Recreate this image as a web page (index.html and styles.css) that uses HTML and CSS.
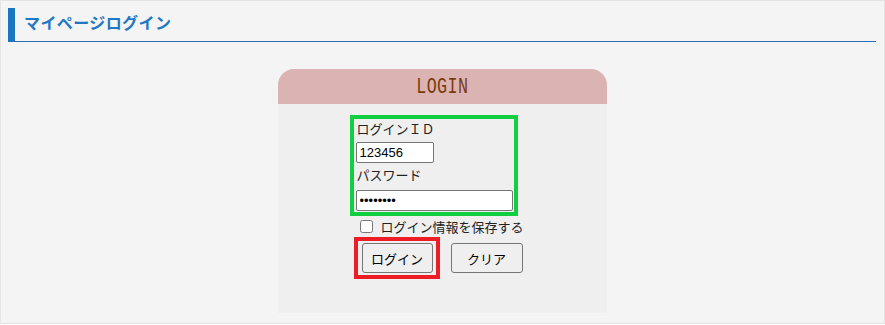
FILE: index.html
```html
<!DOCTYPE html>
<html lang="ja">
<head>
<meta charset="utf-8">
<title>マイページログイン</title>
<link rel="stylesheet" href="styles.css">
</head>
<body>
<div class="page">
  <h1 class="page-title">マイページログイン</h1>
  <div class="login-box">
    <div class="login-head"><span class="login-head-text">LOGIN</span></div>
    <div class="login-body">
      <div class="creds">
        <div class="field-label">ログインＩＤ</div>
        <input class="input input-id" type="text" value="123456">
        <div class="field-label field-label-2">パスワード</div>
        <input class="input input-pw" type="password" value="12345678">
      </div>
      <label class="remember"><input class="remember-check" type="checkbox"><span>ログイン情報を保存する</span></label>
      <div class="actions">
        <div class="login-frame"><button class="btn" type="button">ログイン</button></div>
        <button class="btn btn-clear" type="button">クリア</button>
      </div>
    </div>
  </div>
</div>
</body>
</html>
```
FILE: styles.css
```css
html, body {
  margin: 0;
  padding: 0;
  background: #ffffff;
}
body {
  font-family: "Noto Sans CJK JP", "Noto Sans", sans-serif;
  color: #222;
}
.page {
  box-sizing: border-box;
  width: 885px;
  height: 324px;
  border: 1px solid #e4e4e4;
  background: #f4f4f4;
  padding: 7px 8px 0 7px;
}
.page-title {
  margin: 0;
  height: 33px;
  border-left: 7px solid #1b75c2;
  border-bottom: 1px solid #2a6fb5;
  padding-left: 9px;
  font-size: 16px;
  font-weight: bold;
  line-height: 28px;
  color: #1f77c6;
  letter-spacing: 0.4px;
}
.login-box {
  width: 329px;
  margin: 27px auto 0;
}
.login-head {
  height: 35px;
  background: #dbb3b3;
  border-radius: 16px 16px 0 0;
  display: flex;
  justify-content: center;
  align-items: center;
}
.login-head-text {
  display: inline-block;
  font-family: "Liberation Mono", "DejaVu Sans Mono", monospace;
  font-size: 22px;
  color: #7a3a0c;
  transform: scaleX(0.76);
  letter-spacing: 0.5px;
  line-height: 22px;
  margin-top: 2px;
}
.login-body {
  height: 209px;
  background: #efefef;
  box-sizing: border-box;
  padding: 11px 0 0 72px;
}
.creds {
  box-sizing: border-box;
  width: 168px;
  border: 4px solid #12cf42;
  padding: 0 1px 1px 2px;
}
.field-label {
  font-size: 13px;
  line-height: 20px;
  height: 20px;
  margin-left: 1px;
  margin-bottom: 3px;
}
.field-label-2 {
  margin-bottom: 5px;
}
.input {
  display: block;
  box-sizing: border-box;
  height: 21px;
  border: 1px solid #767676;
  border-radius: 2px;
  background: #fff;
  font-family: "Liberation Sans", Arial, sans-serif;
  font-size: 13px;
  padding: 1px 3px;
  margin: 0;
  color: #000;
}
.input-id {
  width: 78px;
  margin-bottom: 2px;
}
.input-pw {
  width: 157px;
}
.remember {
  display: flex;
  align-items: center;
  height: 21px;
  font-size: 13px;
  margin-left: 8px;
}
.remember-check {
  width: 13px;
  height: 13px;
  margin: 0 8px 0 2px;
}
.actions {
  display: flex;
  align-items: flex-start;
  gap: 11px;
  margin-left: 4px;
}
.login-frame {
  border: 4px solid #ee1c25;
  padding: 2px 3px 2px 4px;
}
.btn {
  display: block;
  width: 71px;
  height: 30px;
  box-sizing: border-box;
  border: 1px solid #767676;
  border-radius: 3px;
  background: #efefef;
  font-family: "Noto Sans CJK JP", "Noto Sans", sans-serif;
  font-size: 13px;
  color: #000;
  padding: 0;
  margin: 0;
}
.btn-clear {
  width: 72px;
  margin-top: 6px;
}
```
